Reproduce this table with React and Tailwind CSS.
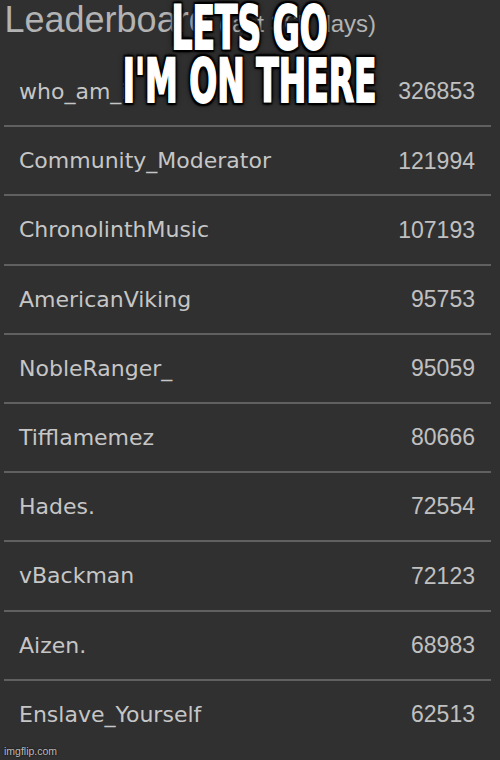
import React from "react";

const rows = [
  ["who_am_i", "326853"],
  ["Community_Moderator", "121994"],
  ["ChronolinthMusic", "107193"],
  ["AmericanViking", "95753"],
  ["NobleRanger_", "95059"],
  ["Tifflamemez", "80666"],
  ["Hades.", "72554"],
  ["vBackman", "72123"],
  ["Aizen.", "68983"],
  ["Enslave_Yourself", "62513"],
];

export default function App() {
  return (
    <div className="relative w-[500px] h-[760px] overflow-hidden bg-[#303030]">
      <div className="h-[58px] pl-[4.5px] pt-[2px] leading-[36px] whitespace-nowrap text-[#b3b3b3] font-['Liberation_Sans',Arial,sans-serif]">
        <span className="text-[36px]">Leaderboard </span>
        <span className="text-[24px]">(last 365 days)</span>
      </div>
      <div className="flex flex-col">
        {rows.map(([name, score], i) => (
          <div key={name} className="flex flex-col">
            {i > 0 && <div className="ml-[4px] w-[487px] h-[2px] bg-[#606060]" />}
            <div className="h-[67.2px] flex items-center justify-between pl-[19px] pr-[25px]">
              <span className="text-[22px] text-[#c6c6c6] font-['DejaVu_Sans',Verdana,sans-serif]">
                {name}
              </span>
              <span className="text-[23px] text-[#c0c0c0] font-['Liberation_Sans',Arial,sans-serif]">
                {score}
              </span>
            </div>
          </div>
        ))}
      </div>

      <div className="absolute left-0 right-0 top-[1px] flex flex-col items-center pointer-events-none">
        <div className="scale-x-[0.6] text-center text-white font-bold text-[61px] leading-[53px] whitespace-nowrap font-['DejaVu_Sans_Condensed','DejaVu_Sans',sans-serif] [font-stretch:condensed] [-webkit-text-stroke:2px_#fff] [text-shadow:0_0_3px_#000,3px_3px_2px_#000,-3px_-3px_2px_#000,3px_-3px_2px_#000,-3px_3px_2px_#000,0_0_9px_#000]">
          <div>LETS GO</div>
          <div>I'M ON THERE</div>
        </div>
      </div>

      <div className="absolute left-[4px] bottom-[3px] text-[10.5px] leading-[12px] text-[#bdbdbd] font-['Liberation_Sans',Arial,sans-serif] [text-shadow:0_0_2px_#000]">
        imgflip.com
      </div>
    </div>
  );
}
